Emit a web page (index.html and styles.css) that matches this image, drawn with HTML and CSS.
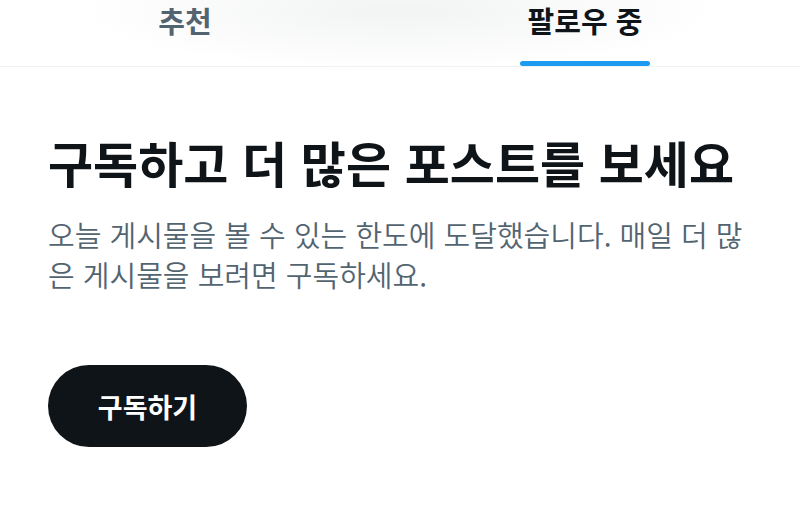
FILE: index.html
```html
<!DOCTYPE html>
<html lang="ko">
<head>
<meta charset="utf-8">
<link rel="stylesheet" href="styles.css">
</head>
<body>
<header class="tabbar">
  <div class="tabs">
    <div class="tab"><span class="tab-label">추천</span></div>
    <div class="tab tab-active"><span class="tab-label">팔로우 중</span><span class="indicator"></span></div>
  </div>
</header>
<main class="content">
  <h1 class="title">구독하고 더 많은 포스트를 보세요</h1>
  <p class="desc">오늘 게시물을 볼 수 있는 한도에 도달했습니다. 매일 더 많은 게시물을 보려면 구독하세요.</p>
  <button class="subscribe">구독하기</button>
</main>
</body>
</html>
```
FILE: styles.css
```css
html, body {
  margin: 0;
  padding: 0;
  background: #ffffff;
  font-family: "Noto Sans CJK KR", "Noto Sans", sans-serif;
  overflow: hidden;
}
.tabbar {
  height: 66px;
  border-bottom: 1px solid #eff3f4;
  background: radial-gradient(ellipse 320px 60px at 400px 10px, #f2f3f3 0%, #ffffff 100%);
}
.tabs {
  display: flex;
  width: 800px;
  height: 66px;
  margin-left: -15px;
}
.tab {
  flex: 1;
  display: flex;
  flex-direction: column;
  align-items: center;
  justify-content: space-between;
}
.tab-label {
  font-size: 29px;
  font-weight: 700;
  color: #536471;
  line-height: 40px;
}
.tab-active .tab-label {
  color: #0f1419;
}
.indicator {
  width: 130px;
  height: 5px;
  border-radius: 3px;
  background: #1d9bf0;
}
.content {
  padding: 0 48px;
}
.title {
  margin: 64px 0 0;
  font-size: 49px;
  font-weight: 700;
  color: #0f1419;
  line-height: 62px;
  white-space: nowrap;
}
.desc {
  margin: 21px 0 0;
  font-size: 29px;
  font-weight: 350;
  line-height: 40px;
  color: #536471;
  word-break: break-all;
}
.subscribe {
  margin-top: 71px;
  width: 199px;
  height: 82px;
  border: none;
  border-radius: 41px;
  background: #0f1419;
  color: #ffffff;
  font-family: inherit;
  font-size: 27px;
  font-weight: 700;
  padding: 0;
}
```
